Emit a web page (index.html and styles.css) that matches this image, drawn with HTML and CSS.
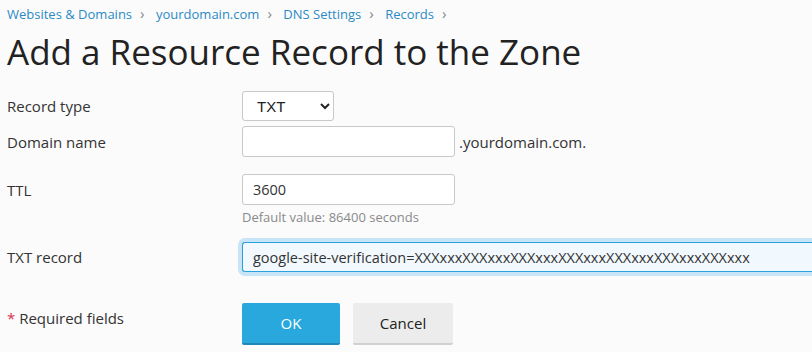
FILE: index.html
```html
<!DOCTYPE html>
<html lang="en">
<head>
    <meta charset="UTF-8">
    <title>Add a Resource Record to the Zone</title>
    <link rel="stylesheet" href="styles.css">
</head>
<body>
    <!-- Caminho de navegação -->
    <nav class="breadcrumbs">
        <a href="#">Websites &amp; Domains</a><span class="sep">&#8250;</span>
        <a href="#">yourdomain.com</a><span class="sep">&#8250;</span>
        <a href="#">DNS Settings</a><span class="sep">&#8250;</span>
        <a href="#">Records</a><span class="sep">&#8250;</span>
    </nav>

    <h1>Add a Resource Record to the Zone</h1>

    <form class="record-form">
        <div class="row row-type">
            <label for="type">Record type</label>
            <select id="type" name="type">
                <option>TXT</option>
                <option>A</option>
                <option>CNAME</option>
                <option>MX</option>
            </select>
        </div>

        <div class="row row-domain">
            <label for="domain">Domain name</label>
            <input type="text" id="domain" name="domain">
            <span class="suffix">.yourdomain.com.</span>
        </div>

        <div class="row row-ttl">
            <label for="ttl">TTL</label>
            <input type="text" id="ttl" name="ttl" value="3600">
        </div>
        <div class="hint">Default value: 86400 seconds</div>

        <div class="row row-txt">
            <label for="txt">TXT record</label>
            <input type="text" id="txt" name="txt" class="focused" value="google-site-verification=XXXxxxXXXxxxXXXxxxXXXxxxXXXxxxXXXxxxXXXxxx">
        </div>

        <div class="row row-actions">
            <div class="required"><span class="star">*</span> Required fields</div>
            <button type="submit" class="btn btn-ok">OK</button>
            <button type="button" class="btn btn-cancel">Cancel</button>
        </div>
    </form>
</body>
</html>
```

FILE: styles.css
```css
body {
    margin: 0;
    padding: 0 7px;
    background-color: #fbfbfb;
    color: #333;
    font-family: "Open Sans", Arial, sans-serif;
    overflow: hidden;
}

.breadcrumbs {
    padding-top: 4px;
    font-size: 13px;
    line-height: 19px;
}

.breadcrumbs a {
    color: #2b8ac6;
    text-decoration: none;
}

.breadcrumbs .sep {
    color: #888;
    margin: 0 8px;
    font-size: 15px;
}

h1 {
    margin: 4px 0 0;
    font-size: 35px;
    font-weight: normal;
    line-height: 48px;
    color: #222;
}

.record-form {
    margin-top: 15px;
}

.row {
    display: flex;
    align-items: center;
}

.row label,
.required {
    width: 235px;
    flex-shrink: 0;
    font-size: 15px;
}

select {
    width: 92px;
    height: 30px;
    padding: 0 6px 0 10px;
    border: 1px solid #c8c8c8;
    border-radius: 3px;
    background-color: #fff;
    font-family: "Liberation Sans", Arial, sans-serif;
    font-size: 15px;
    color: #222;
}

input[type="text"] {
    box-sizing: border-box;
    width: 213px;
    height: 31px;
    padding: 0 10px;
    border: 1px solid #c8c8c8;
    border-radius: 3px;
    background-color: #fff;
    font-family: "Open Sans", Arial, sans-serif;
    font-size: 14.5px;
    color: #333;
}

.row-domain {
    margin-top: 5px;
}

.suffix {
    margin-left: 4px;
    font-size: 15px;
}

.row-ttl {
    margin-top: 17px;
}

.hint {
    padding-left: 235px;
    margin-top: 3px;
    font-size: 13px;
    line-height: 19px;
    color: #8a8a8a;
}

.row-txt {
    margin-top: 15px;
}

/* o campo continua até a borda da janela */
input.focused {
    width: 570px;
    flex-shrink: 0;
    height: 30px;
    border-color: #2aa0dc;
    border-right-width: 0;
    border-radius: 3px 0 0 3px;
    background-color: #f2f9fe;
    box-shadow: 0 0 0 4px #c8e5f7;
    outline: none;
}

.row-actions {
    margin-top: 31px;
    align-items: flex-start;
}

.required {
    padding-top: 5px;
}

.star {
    color: #d9304f;
}

.btn {
    height: 42px;
    border: none;
    border-radius: 2px;
    font-family: "Open Sans", Arial, sans-serif;
    font-size: 15px;
    cursor: pointer;
}

.btn-ok {
    width: 98px;
    background-color: #29a8dd;
    border-bottom: 2px solid #1f88b8;
    color: #fff;
}

.btn-cancel {
    width: 100px;
    margin-left: 13px;
    background-color: #ececec;
    border-bottom: 2px solid #d0d0d0;
    color: #222;
}
```
